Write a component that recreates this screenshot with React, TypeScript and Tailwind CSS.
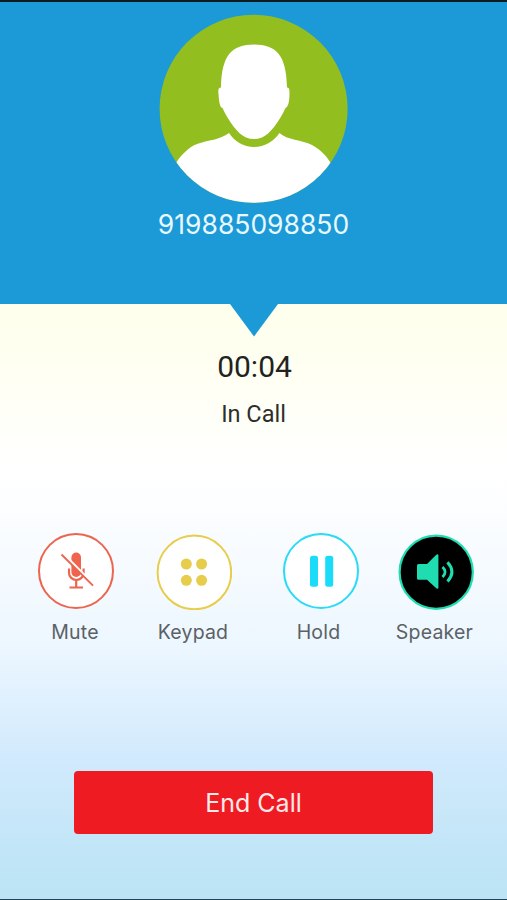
import { useState } from "react";
import type { ReactNode } from "react";

const MuteIcon = () => (
  <svg viewBox="0 0 76 76" className="h-[76px] w-[76px]" fill="none">
    <circle cx="38" cy="38" r="37" fill="#fff" stroke="#ec654f" strokeWidth="2" />
    <rect x="33.4" y="19.6" width="9.6" height="24.4" rx="4.8" fill="#f0634c" />
    <path d="M31 35.5v4.2a7.3 7.3 0 0 0 14.6 0V35.5" stroke="#ec654f" strokeWidth="2.2" />
    <path d="M38.2 47v7M31.5 54.5h13.5" stroke="#ec654f" strokeWidth="2.2" />
    <path d="M25.5 21l30 30.3" stroke="#fff" strokeWidth="2.6" />
    <path d="M23.5 21.5l31.5 31.2" stroke="#ec654f" strokeWidth="1.9" />
  </svg>
);

const KeypadIcon = () => (
  <svg viewBox="0 0 76 76" className="h-[76px] w-[76px]">
    <circle cx="38.4" cy="38.4" r="36.8" fill="#fff" stroke="#e7cd4c" strokeWidth="2" />
    <g fill="#e7cd4c">
      <circle cx="30.3" cy="30" r="5.5" />
      <circle cx="45.6" cy="30" r="5.5" />
      <circle cx="30.3" cy="46.3" r="5.5" />
      <circle cx="45.6" cy="46.3" r="5.5" />
    </g>
  </svg>
);

const HoldIcon = () => (
  <svg viewBox="0 0 76 76" className="h-[76px] w-[76px]">
    <circle cx="38" cy="38" r="37" fill="#fff" stroke="#2bdaf5" strokeWidth="2" />
    <rect x="27" y="22.8" width="8" height="31" rx="2.5" fill="#1bdcf8" />
    <rect x="42.2" y="22.8" width="8" height="31" rx="2.5" fill="#1bdcf8" />
  </svg>
);

const SpeakerIcon = () => (
  <svg viewBox="0 0 76 76" className="h-[76px] w-[76px]" fill="none">
    <circle cx="38.2" cy="38.2" r="36.6" fill="#000" stroke="#1fddb0" strokeWidth="2.2" />
    <path
      d="M20.5 30H29L38.3 20.8Q40.4 19.5 40.4 21.5V53.5Q40.4 55.5 38.3 54.2L29 45.8H20.5Q19 45.8 19 44.3V31.5Q19 30 20.5 30Z"
      fill="#1fddb0"
    />
    <path d="M44.5 33q5.2 4.8 0 10" stroke="#1fddb0" strokeWidth="2.8" />
    <path d="M49.5 28.3q8.8 9.6 0 19.2" stroke="#1fddb0" strokeWidth="3" />
  </svg>
);

const controls: { label: string; icon: ReactNode; item: string; text: string }[] = [
  { label: "Mute", icon: <MuteIcon />, item: "ml-[38px]", text: "mt-[11px] -ml-0.5" },
  { label: "Keypad", icon: <KeypadIcon />, item: "ml-[42px] pt-px", text: "mt-2.5 -ml-0.5" },
  { label: "Hold", icon: <HoldIcon />, item: "ml-[51px]", text: "mt-[11px] -ml-[5px]" },
  { label: "Speaker", icon: <SpeakerIcon />, item: "ml-[39px] pt-px", text: "mt-2.5 -ml-[3px]" },
];

const App = () => {
  const [active, setActive] = useState("Speaker");

  return (
    <main className="flex h-[900px] w-[507px] flex-col overflow-hidden border-t-2 border-b border-t-[#0b1c23] border-b-[#28425a] bg-[#1b9ad7] font-['Roboto','Liberation_Sans',sans-serif]">
      {/* Caller */}
      <header className="flex h-[302px] shrink-0 flex-col items-center bg-[#1b9ad7] pt-3">
        <svg viewBox="0 0 190 190" className="h-[190px] w-[190px]">
          <defs>
            <clipPath id="avatar">
              <circle cx="94.6" cy="94.8" r="94" />
            </clipPath>
          </defs>
          <g clipPath="url(#avatar)">
            <rect width="190" height="190" fill="#93be20" />
            <path
              d="M95 30.5C73 30.5 62.500 41 62 73.5C59.5 73.5 59 76 59.500 80C60 87 60.500 93 63.5 94C70 108 79 120 87 123.5Q95 126.5 103 123.5C111 120 120 108 126.5 94C129.5 93 130.5 86 130.5 80C130.5 76 130.5 73.5 128 73.5C127.5 41 117 30.5 95 30.5Z"
              fill="#fff"
            />
            <path
              d="M70 119Q79 132.5 95 133Q111 132.5 120.5 119C128 126 143 126 153 131C162 136 168 142 173.5 152V190H17V149C22 141 30 133 38 130C49 126 61 126 70 119Z"
              fill="#fff"
            />
          </g>
        </svg>
        <h1 className="mt-1 font-['Inter','Liberation_Sans',sans-serif] text-[26.5px] leading-8 font-normal text-[#e9f8ff]">
          919885098850
        </h1>
      </header>

      <section className="flex flex-1 flex-col items-center bg-[linear-gradient(to_bottom,#ffffed_0%,#fffff0_8%,#ffffff_28%,#f9fcff_39%,#edf7ff_57%,#d2eafd_76%,#bfe5f6_94%,#bce4f4_100%)]">
        <svg viewBox="0 0 48 33" className="h-[33px] w-12">
          <path d="M0 0H48L24 32.5Z" fill="#1b9ad7" />
        </svg>

        {/* Call status */}
        <p className="mt-3 ml-0.5 text-[30px] leading-9 text-[#22231f]">00:04</p>
        <p className="mt-[15px] text-[23.5px] leading-7 text-[#2d2e2c]">In Call</p>

        <div className="mt-[105px] flex w-full items-start">
          {controls.map((control) => (
            <button
              key={control.label}
              className={`flex w-[76px] shrink-0 flex-col items-center ${control.item}`}
              aria-pressed={active === control.label}
              onClick={() => setActive(control.label)}
            >
              {control.icon}
              <span
                className={`font-['Inter','Liberation_Sans',sans-serif] text-[19.5px] leading-6 tracking-[0.2px] text-[#5b6165] ${control.text}`}
              >
                {control.label}
              </span>
            </button>
          ))}
        </div>

        <button className="mt-[127px] h-[63px] w-[359px] rounded bg-[#ef1b23] pt-0.5 font-['Inter','Liberation_Sans',sans-serif] text-[25px] font-normal text-[#ffe9ea]">
          End Call
        </button>
      </section>
    </main>
  );
};

export default App;
